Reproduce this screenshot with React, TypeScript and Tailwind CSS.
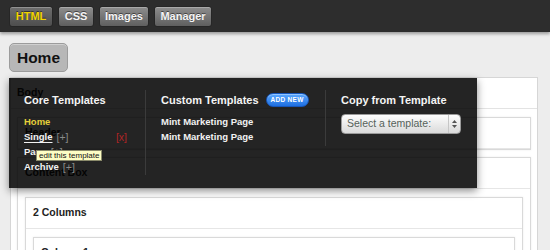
import React from "react"

const tabs = [
  { label: "HTML", w: "w-[44px]", active: true },
  { label: "CSS", w: "w-[36px]", active: false },
  { label: "Images", w: "w-[50px]", active: false },
  { label: "Manager", w: "w-[58px]", active: false },
]

const core = ["Home", "Single", "Page", "Archive"]

function Box({ title, children }: { title: string; children?: React.ReactNode }) {
  return (
    <div className="bg-white border border-[#d9d9d9] shadow-[0_0_2px_rgba(0,0,0,0.08)]">
      <div className="h-[31px] flex items-center pl-[7px] border-b border-[#e6e6e6] text-[10.5px] font-bold text-[#222]">
        {title}
      </div>
      {children && <div className="px-[7px] pt-[8px]">{children}</div>}
    </div>
  )
}

export default function App() {
  return (
    <div className="relative w-[550px] h-[250px] overflow-hidden bg-[#ededed] font-['Liberation_Sans',Arial,sans-serif]">
      {/* top tab bar */}
      <div className="h-[32px] bg-[#2d2d2d] flex items-center gap-[5px] pl-[9px] shadow-[0_2px_3px_rgba(0,0,0,0.35)]">
        {tabs.map(t => (
          <div
            key={t.label}
            className={`${t.w} h-[21px] flex items-center justify-center rounded-[3px] border border-[#262626] text-[11px] font-bold shadow-[inset_0_1px_0_rgba(255,255,255,0.25)] [text-shadow:0_-1px_0_rgba(0,0,0,0.5)] ${
              t.active
                ? "bg-gradient-to-b from-[#6e6e6e] to-[#4e4e4e] text-[#f2d400]"
                : "bg-gradient-to-b from-[#8e8e8e] to-[#5f5f5f] text-[#f4f4f4]"
            }`}
          >
            {t.label}
          </div>
        ))}
      </div>

      <div className="pl-[9px] pt-[11px]">
        <div className="w-[59px] h-[29px] flex items-center justify-center rounded-[5px] bg-[#b7b7b7] border border-[#9c9c9c] shadow-[inset_0_1px_0_rgba(255,255,255,0.35)] text-[15.5px] font-bold text-[#111]">
          Home
        </div>
      </div>

      {/* page structure behind the menu */}
      <div className="ml-[10px] mr-[12px] mt-[5px] bg-white border border-[#d6d6d6]">
        <div className="h-[31px] flex items-center pl-[6px] border-b border-[#e3e3e3] text-[10.5px] font-bold text-[#222]">
          Body
        </div>
        <div className="px-[6px] pt-[8px] flex flex-col gap-[7px]">
          <Box title="Header" />
          <Box title="Content Box">
            <Box title="2 Columns">
              <Box title="Column 1" />
            </Box>
          </Box>
        </div>
      </div>

      {/* template menu */}
      <div className="absolute left-[9px] top-[78px] w-[468px] h-[110px] bg-black/[0.86] shadow-[0_3px_8px_rgba(0,0,0,0.45)] flex items-start pt-[12px]">
        <div className="relative w-[137px] pl-[15px] pr-[18px] border-r border-[#3b3b3b]">
          <div className="h-[20px] leading-[20px] text-[11px] font-bold text-[#f4f4f4]">Core Templates</div>
          <div className="mt-[5px]">
            {core.map(name => (
              <div key={name} className="h-[15px] flex items-center justify-between">
                <div className="flex items-center">
                  <span
                    className={`text-[9.5px] font-bold ${
                      name === "Home" ? "text-[#e6cf3a]" : "text-[#f2f2f2]"
                    } ${name === "Single" ? "underline underline-offset-[2px]" : ""}`}
                  >
                    {name}
                  </span>
                  {name !== "Home" && <span className="ml-[4px] text-[10.5px] text-[#8a8a8a]">[+]</span>}
                </div>
                {name === "Single" && <span className="text-[10.5px] text-[#b02424]">[x]</span>}
              </div>
            ))}
          </div>
          <div className="absolute left-[27px] top-[60px] h-[11px] px-[2px] flex items-center bg-[#fdfdc4] border border-[#8a8a6a] text-[8px] text-[#111] whitespace-nowrap">
            edit this template
          </div>
        </div>

        <div className="w-[180px] pl-[15px] pb-[1px] border-r border-[#3b3b3b]">
          <div className="h-[20px] flex items-center">
            <span className="text-[11px] font-bold text-[#f4f4f4]">Custom Templates</span>
            <span className="ml-[7px] w-[43px] h-[14px] flex items-center justify-center rounded-full bg-gradient-to-b from-[#5aa8ff] to-[#1d6fe2] border border-[#1656bb] text-[6.5px] font-bold tracking-[0.3px] text-white shadow-[inset_0_1px_0_rgba(255,255,255,0.35)]">
              ADD NEW
            </span>
          </div>
          <div className="mt-[5px]">
            <div className="h-[15px] flex items-center text-[9.5px] font-bold text-[#f2f2f2]">Mint Marketing Page</div>
            <div className="h-[15px] flex items-center text-[9.5px] font-bold text-[#f2f2f2]">Mint Marketing Page</div>
          </div>
        </div>

        <div className="pl-[15px]">
          <div className="h-[20px] leading-[20px] text-[11px] font-bold text-[#f4f4f4]">Copy from Template</div>
          <div className="mt-[4px] w-[120px] h-[20px] flex items-stretch rounded-[4px] border border-[#9a9a9a] bg-gradient-to-b from-[#fdfdfd] to-[#dadada]">
            <div className="flex-1 flex items-center pl-[5px] text-[10.5px] text-[#56625a]">Select a template:</div>
            <div className="w-[12px] border-l border-[#c6c6c6] flex flex-col items-center justify-center gap-[2px]">
              <svg width="5" height="3" viewBox="0 0 5 3"><path d="M0 3 L2.5 0 L5 3 Z" fill="#555" /></svg>
              <svg width="5" height="3" viewBox="0 0 5 3"><path d="M0 0 L2.5 3 L5 0 Z" fill="#555" /></svg>
            </div>
          </div>
        </div>
      </div>
    </div>
  )
}
